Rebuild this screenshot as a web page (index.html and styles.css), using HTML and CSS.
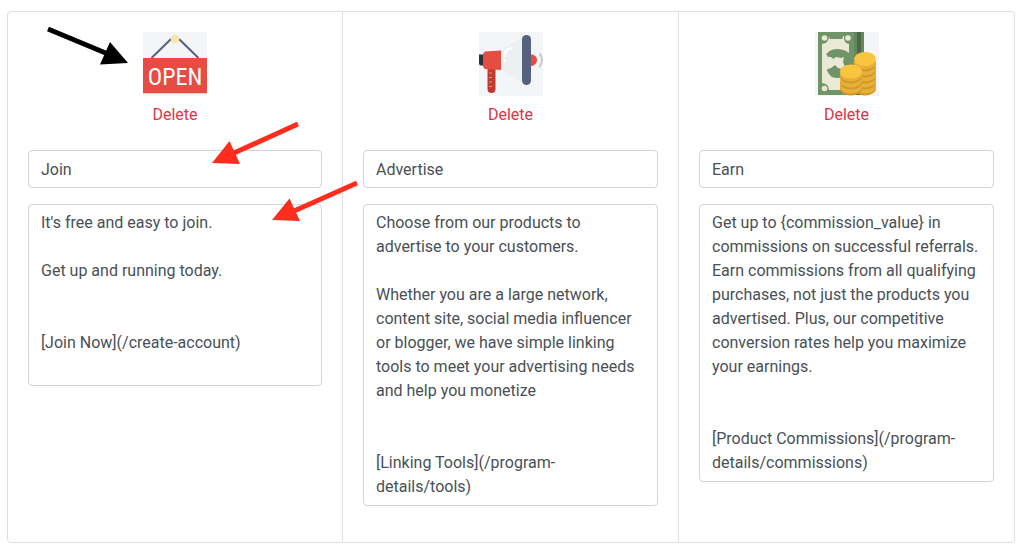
FILE: index.html
```
<!DOCTYPE html>
<html lang="en">
<head>
<meta charset="utf-8">
<title>Program steps</title>
<link rel="stylesheet" href="styles.css">
</head>
<body>
<main class="card-group">
  <section class="card">
    <svg class="card-icon" viewBox="0 0 64 64" role="img" aria-label="Open sign">
      <rect width="64" height="64" fill="#f4f5f7"/>
      <path d="M8.500 26 28 7M36 7l19.500 19" fill="none" stroke="#56617f" stroke-width="2"/>
      <circle cx="32" cy="7" r="4.300" fill="#f8e5ad"/>
      <rect y="26" width="64" height="35" fill="#e54d42"/>
      <rect y="61" width="64" height="1" fill="#f1c9c7"/>
      <text class="sign-text" x="32" y="53" text-anchor="middle">OPEN</text>
    </svg>
    <button class="delete" type="button">Delete</button>
    <input class="field" type="text" aria-label="Join title" value="Join">
    <textarea class="field" rows="7" aria-label="Join text">It's free and easy to join.

Get up and running today.


[Join Now](/create-account)</textarea>
  </section>
  <section class="card">
    <svg class="card-icon" viewBox="0 0 64 64" role="img" aria-label="Megaphone">
      <rect width="64" height="64" fill="#f4f5f7"/>
      <path d="M0 22.500h5v11H2q-2 0-2-2z" fill="#2c2f3c"/>
      <path d="M8.500 37h8v20q0 4-4 4t-4-4z" fill="#c03a31"/>
      <path d="M10 41h3M10 45.500h3M10 50h3M10 54.500h3" stroke="#e58d86" stroke-width="1"/>
      <path d="M22 18.500 44 5v46L22 38z" fill="#ecf0f1"/>
      <path d="M6 19.500 22 18.500V38L6 37q-2-1-2-3V23q0-2.500 2-3.500z" fill="#e54d42"/>
      <path d="M26 24q0-7.500 7-8" fill="none" stroke="#fff" stroke-width="2" stroke-linecap="round"/>
      <path d="M26 28v1" stroke="#fff" stroke-width="2" stroke-linecap="round"/>
      <path d="M51 22.500h2q5 1 5 5.500t-5 6h-2z" fill="#e54d42"/>
      <rect x="43" y="3" width="9" height="50" rx="4.500" fill="#56617f"/>
      <path d="M60.500 21.500q2.500 3 2.500 6.500t-2.500 7" fill="none" stroke="#c9c9ca" stroke-width="2"/>
    </svg>
    <button class="delete" type="button">Delete</button>
    <input class="field" type="text" aria-label="Advertise title" value="Advertise">
    <textarea class="field" rows="12" aria-label="Advertise text">Choose from our products to advertise to your customers.

Whether you are a large network, content site, social media influencer or blogger, we have simple linking tools to meet your advertising needs and help you monetize


[Linking Tools](/program-details/tools)</textarea>
  </section>
  <section class="card">
    <svg class="card-icon" viewBox="0 0 64 64" role="img" aria-label="Money">
      <defs>
        <g id="coins">
          <path d="M0 0v3a11 6.500 0 0 0 22 0V0z" fill="#cf982c"/>
          <path d="M0-1v2a11 6.500 0 0 0 22 0v-2z" fill="#e8b037"/>
        </g>
      </defs>
      <rect width="64" height="64" fill="#f4f5f7"/>
      <path d="M35 0h14v63H35z" fill="#4c6648"/>
      <path d="M39 0h3v63h-3zM46 0h3v63h-3z" fill="#64875e"/>
      <path d="M3 0h36v63H3z" fill="#6f9468"/>
      <path d="M14 4q0 2 1 3h12q1-1 1-3h1v2q0 5 5 6v39q-5 1-5 7H14q0-6-7-7V12q7-1 7-8z" fill="#eae9d5"/>
      <circle cx="9.500" cy="6" r="2.800" fill="#eae9d5"/>
      <circle cx="33" cy="6" r="2.800" fill="#eae9d5"/>
      <circle cx="9.500" cy="56.500" r="2.800" fill="#eae9d5"/>
      <path d="M10 25q3-8 12-8 9 0 14 6v17q-6 6-14 6-8 0-11-10z" fill="#6f9468"/>
      <path d="M7 22h4l2 3q3-1 5 2l3-2 5 1 3-1-1 5 2 5-3 2-4-1-3-3-4 3-3 1-2 1H7z" fill="#eae9d5"/>
      <use href="#coins" x="39" y="54"/>
      <use href="#coins" x="39" y="48"/>
      <use href="#coins" x="39" y="42"/>
      <use href="#coins" x="39" y="36"/>
      <use href="#coins" x="39" y="30"/>
      <ellipse cx="50" cy="27" rx="11" ry="7" fill="#fac43f"/>
      <use href="#coins" x="25" y="54"/>
      <use href="#coins" x="25" y="48"/>
      <use href="#coins" x="25" y="42"/>
      <ellipse cx="36" cy="39.500" rx="11" ry="7" fill="#fac43f"/>
    </svg>
    <button class="delete" type="button">Delete</button>
    <input class="field" type="text" aria-label="Earn title" value="Earn">
    <textarea class="field" rows="11" aria-label="Earn text">Get up to {commission_value} in commissions on successful referrals. Earn commissions from all qualifying purchases, not just the products you advertised. Plus, our competitive conversion rates help you maximize your earnings.


[Product Commissions](/program-details/commissions)</textarea>
  </section>
  <svg class="arrows" viewBox="7 11 352 220" aria-hidden="true">
    <g fill="#000" stroke="#000"><path d="M48 29 108 54" stroke-width="5"/><path d="M128 63 110 42 100 64.500z" stroke="none"/></g>
    <g fill="#ff2d1f" stroke="#ff2d1f">
      <path d="M298 124 234 153M357 183 294 211" stroke-width="5"/>
      <path d="M212 163 229.500 141 240 164zM272 220 289.500 198.500 300 221z" stroke="none"/>
    </g>
  </svg>
</main>
</body>
</html>
```
FILE: styles.css
```
* {
  box-sizing: border-box;
}

body {
  margin: 11px 8px 10px 7px;
  background: #fff;
  color: #495057;
  font: 16px/24px Roboto, "Liberation Sans", sans-serif;
}

.card-group {
  position: relative;
  display: grid;
  grid-template-columns: repeat(3, 1fr);
}

.card {
  display: flex;
  flex-direction: column;
  align-items: center;
  min-width: 0;
  padding: 20px;
  border: 1px solid #dfdfdf;
}

.card + .card {
  border-left: 0;
}

.card:first-of-type {
  border-radius: 4px 0 0 4px;
}

.card:last-of-type {
  border-radius: 0 4px 4px 0;
}

.card-icon {
  width: 64px;
  height: 64px;
}

.sign-text {
  fill: #fff;
  font: 24px "Liberation Sans Narrow", "Roboto Condensed", "Open Sans Condensed", Roboto, sans-serif;
}

.delete {
  margin: 0 0 16px;
  padding: 6px 12px;
  border: 1px solid transparent;
  background: none;
  color: #dc3545;
  font: inherit;
  cursor: pointer;
}

.field {
  display: block;
  width: 100%;
  margin: 0 0 16px;
  padding: 6px 12px;
  border: 1px solid #ced4da;
  border-radius: 4px;
  background: #fff;
  color: inherit;
  font: inherit;
  resize: none;
  overflow: hidden;
}

input.field {
  height: 38px;
}

.arrows {
  position: absolute;
  top: 0;
  left: 0;
  width: 352px;
  height: 220px;
  pointer-events: none;
}
```
